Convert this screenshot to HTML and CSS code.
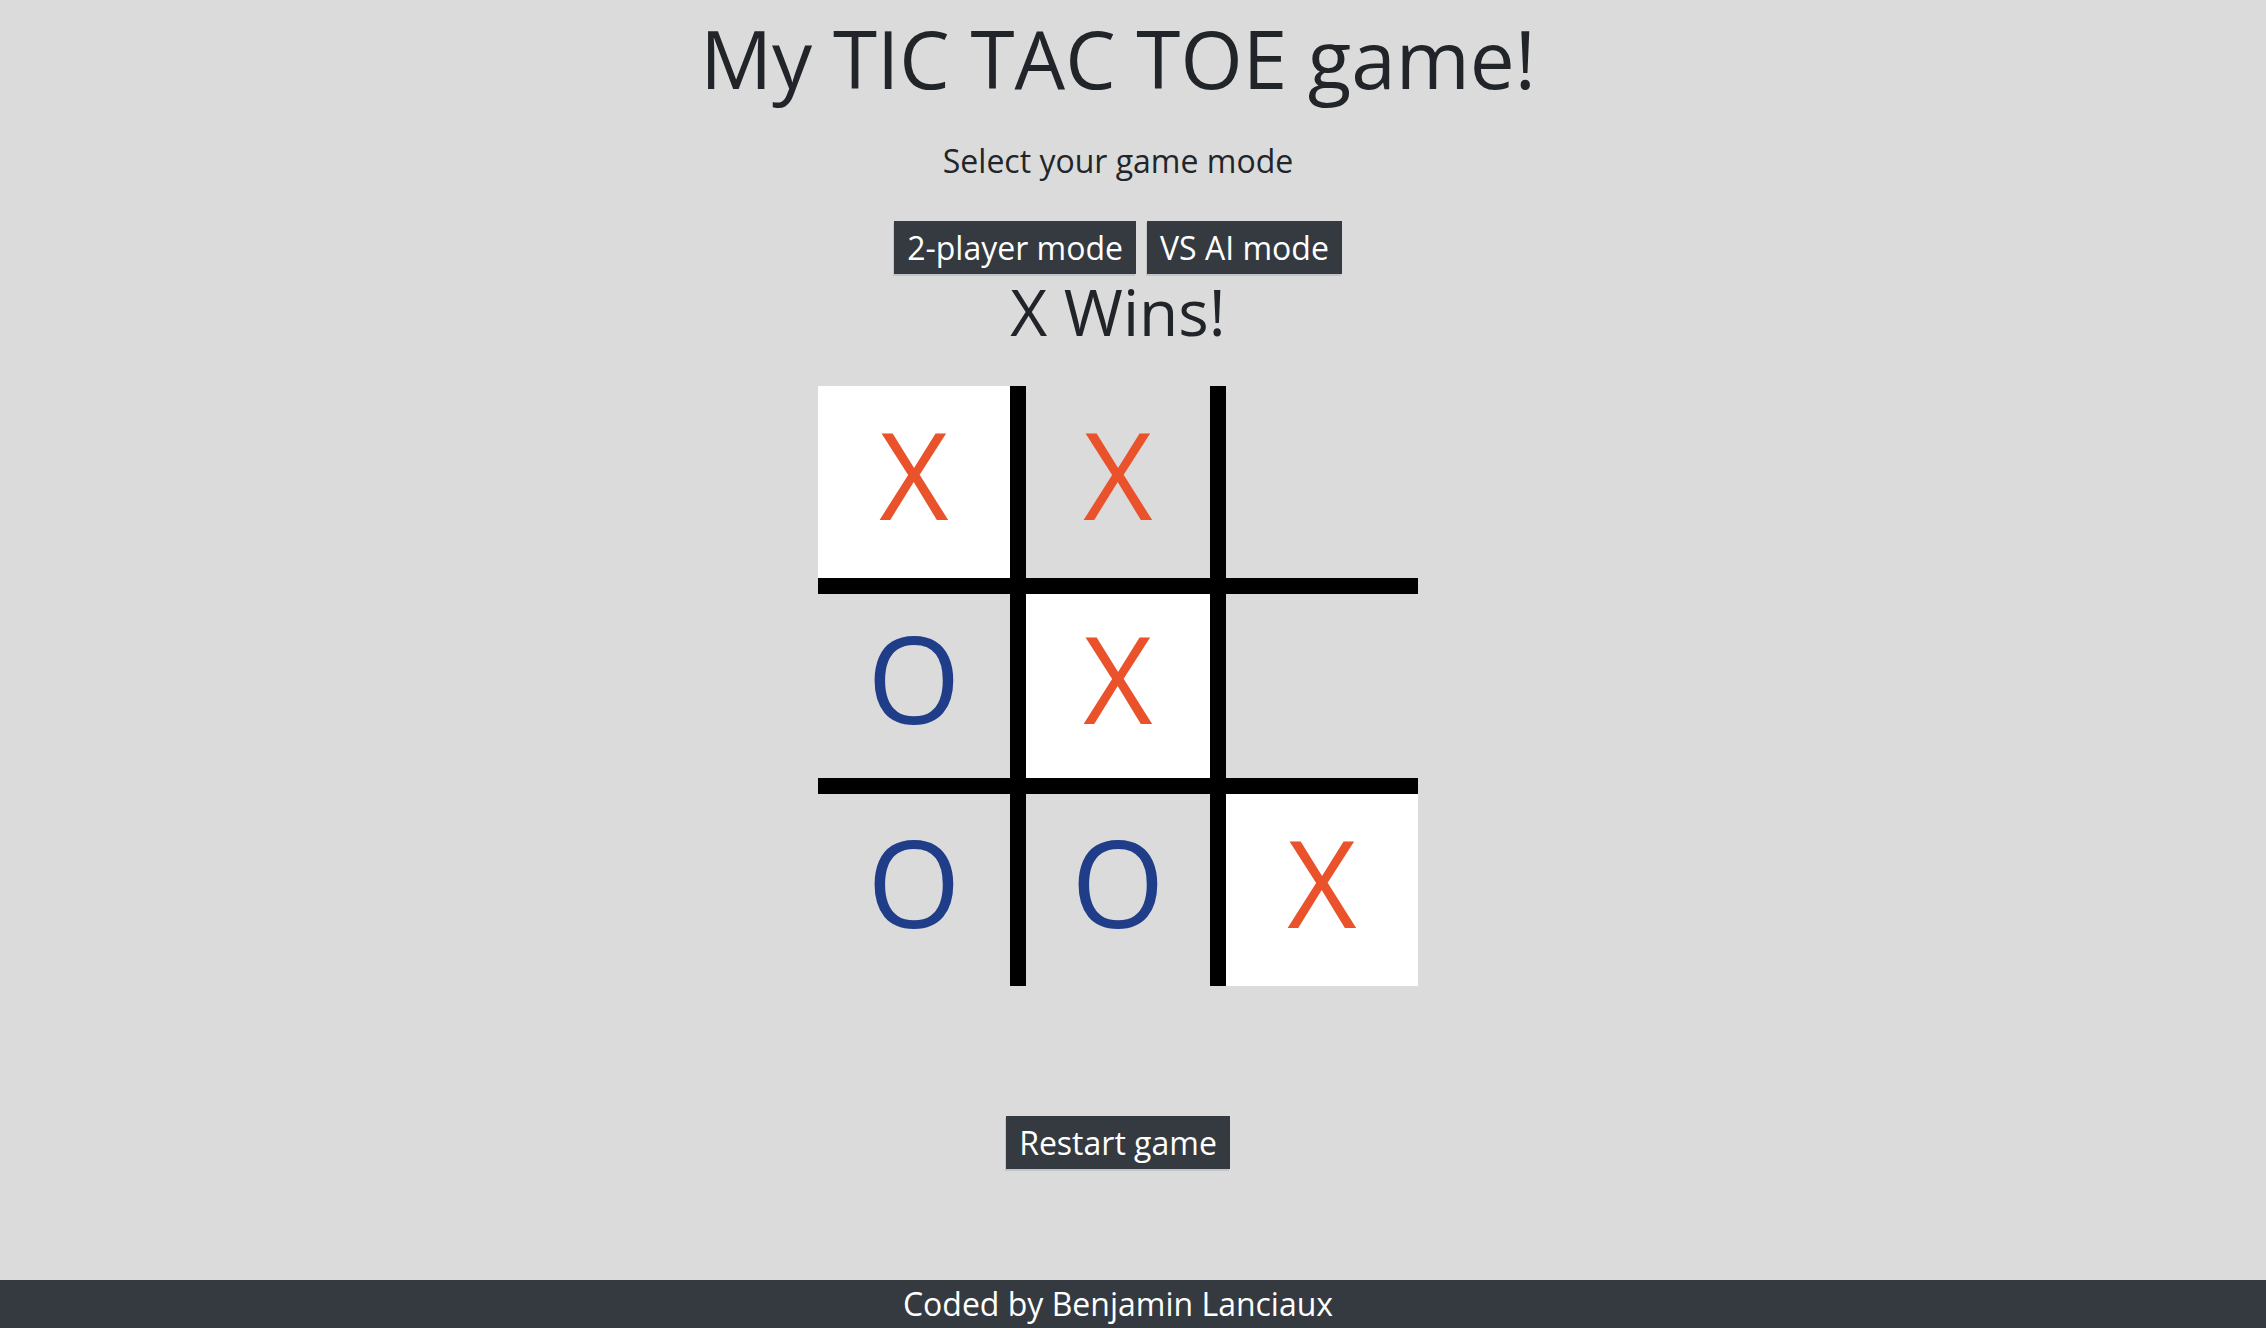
FILE: index.html
```html
<!DOCTYPE html>
<html lang="en">
<head>
<meta charset="utf-8">
<title>Tic Tac Toe</title>
<link rel="stylesheet" href="styles.css">
</head>
<body>
<main class="page">
  <h1 class="title">My TIC TAC TOE game!</h1>
  <p class="subtitle">Select your game mode</p>
  <div class="modes">
    <button class="btn">2-player mode</button>
    <button class="btn">VS AI mode</button>
  </div>
  <h2 class="status">X Wins!</h2>
  <div class="board">
    <div class="cell c-tl win x">X</div>
    <div class="cell c-tm x">X</div>
    <div class="cell c-tr"></div>
    <div class="cell c-ml o">O</div>
    <div class="cell c-mm win x">X</div>
    <div class="cell c-mr"></div>
    <div class="cell c-bl o">O</div>
    <div class="cell c-bm o">O</div>
    <div class="cell c-br win x">X</div>
  </div>
  <div class="restart">
    <button class="btn">Restart game</button>
  </div>
</main>
<footer class="footer">
  <span class="footer-text">Coded by Benjamin Lanciaux</span>
</footer>
</body>
</html>
```
FILE: styles.css
```css
html, body {
  margin: 0;
  padding: 0;
}
body {
  background: #dbdbdb;
  color: #212529;
  font-family: "Open Sans", "Noto Sans", sans-serif;
  height: 1328px;
  display: flex;
  flex-direction: column;
}
.page {
  flex: 1;
  display: flex;
  flex-direction: column;
  align-items: center;
  padding-right: 30px;
}
.title {
  font-size: 80px;
  font-weight: 400;
  line-height: 109px;
  margin: 3px 0 0;
}
.subtitle {
  font-size: 32px;
  line-height: 44px;
  margin: 27px 0 0;
}
.modes {
  display: flex;
  gap: 11px;
  margin-top: 38px;
}
.btn {
  font-family: "Open Sans", "Noto Sans", sans-serif;
  font-size: 32px;
  line-height: 43px;
  color: #ffffff;
  background: #343a40;
  border: none;
  border-radius: 0;
  padding: 5px 13px;
  box-shadow: -1px 2px 0 #c3c5c7;
}
.status {
  font-size: 64px;
  font-weight: 400;
  line-height: 70px;
  margin: 3px 0 0;
}
.board {
  display: grid;
  grid-template-columns: repeat(3, 200px);
  grid-template-rows: repeat(3, 200px);
  margin-top: 39px;
}
.cell {
  box-sizing: border-box;
  border: 0 solid #000;
  display: flex;
  align-items: center;
  justify-content: center;
  font-size: 120px;
  line-height: 1;
  padding-bottom: 16px;
}
.win { background: #ffffff; }
.x { color: #e9522a; }
.o { color: #1f3d88; }
.c-tl { border-right-width: 8px; border-bottom-width: 8px; }
.c-tm { border-left-width: 8px; border-right-width: 8px; border-bottom-width: 8px; }
.c-tr { border-left-width: 8px; border-bottom-width: 8px; }
.c-ml { border-right-width: 8px; border-top-width: 8px; border-bottom-width: 8px; }
.c-mm { border-width: 8px; }
.c-mr { border-left-width: 8px; border-top-width: 8px; border-bottom-width: 8px; }
.c-bl { border-right-width: 8px; border-top-width: 8px; }
.c-bm { border-left-width: 8px; border-right-width: 8px; border-top-width: 8px; }
.c-br { border-left-width: 8px; border-top-width: 8px; }
.restart {
  margin-top: 130px;
}
.footer {
  background: #343a40;
  color: #ffffff;
  height: 48px;
  display: flex;
  justify-content: center;
  align-items: center;
  padding-right: 30px;
}
.footer-text {
  font-size: 32px;
  line-height: 48px;
}
```
